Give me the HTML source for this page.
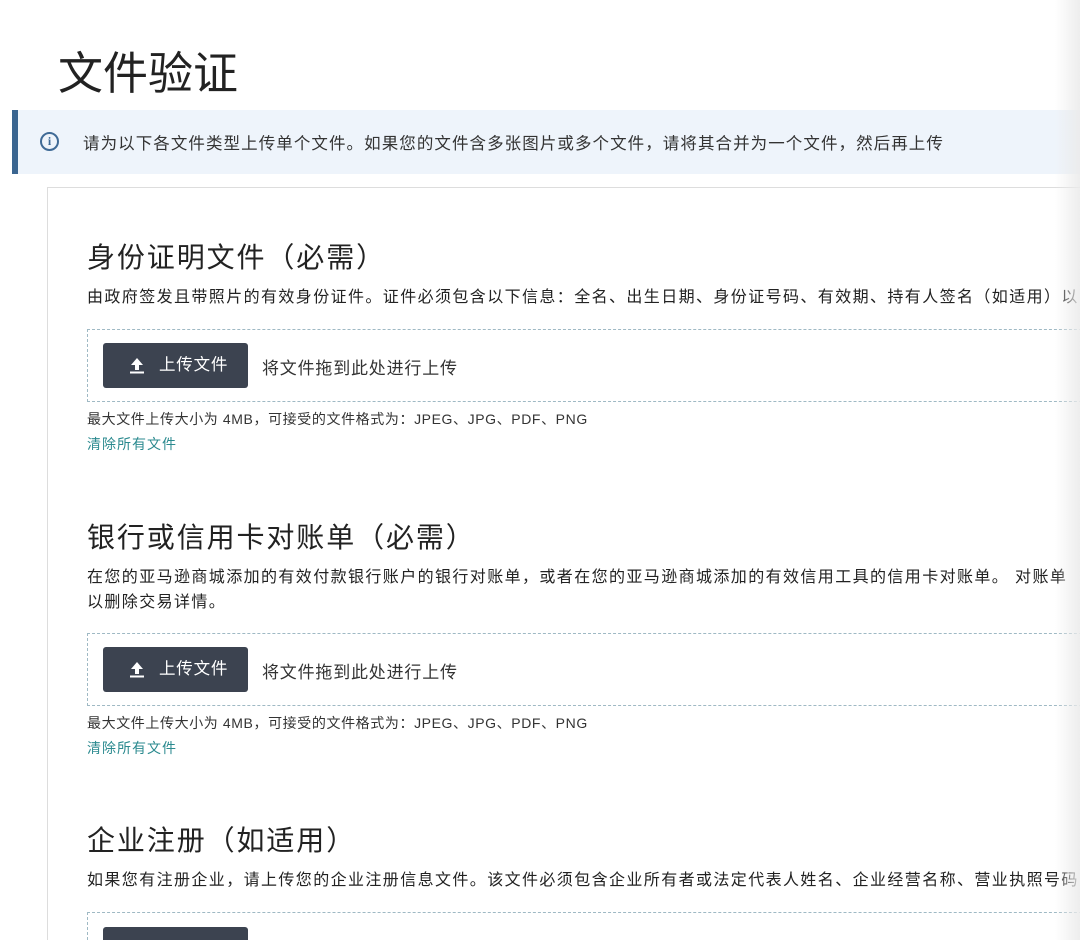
<!DOCTYPE html>
<html style="overflow:hidden;height:940px"><head><meta charset="utf-8"><style>
body{margin:0;width:1080px;height:940px;overflow:hidden;background:#fff;font-family:"Liberation Sans","Noto Sans CJK SC",sans-serif;color:#222;position:relative}
.abs{position:absolute;white-space:nowrap}
h1{position:absolute;left:58px;top:44px;margin:0;font-size:45px;font-weight:normal;line-height:60px;color:#222}
.info{position:absolute;left:12px;top:110px;width:1068px;height:64px;background:#eef4fb;border-left:6px solid #3a6590;box-sizing:border-box}
.info .t{position:absolute;left:65px;top:20px;font-size:16.5px;letter-spacing:1.07px;color:#333}
.ico{position:absolute;left:22px;top:22px;width:19px;height:19px;border:2px solid #3f6a96;border-radius:50%;box-sizing:border-box;color:#3f6a96;font:bold 12px/15px "Liberation Serif",serif;text-align:center}
.card{position:absolute;left:47px;top:187px;width:1100px;height:760px;border:1px solid #ddd}
.h{font-size:28px;line-height:36px;color:#222;left:87px;letter-spacing:1.9px}
.d{font-size:16px;line-height:25px;color:#222;left:87px;letter-spacing:1.4px}
.drop{position:absolute;left:87px;width:1000px;height:73px;border:1px dashed #9fb9c4;box-sizing:border-box}
.btn{position:absolute;left:103px;width:145px;height:45px;background:#3c4350;border-radius:3px;color:#fff;font-size:16.5px;line-height:45px}
.btn span{position:absolute;left:56px;letter-spacing:0.8px}
.btn svg{position:absolute;left:26px;top:14px}
.dr{left:262px;font-size:17px;letter-spacing:0.8px;color:#333}
.s{left:87px;font-size:14px;color:#333;letter-spacing:0.6px}
.c{left:87px;font-size:14px;color:#2b8a8f;letter-spacing:1px}
.fade{position:absolute;right:0;top:0;width:25px;height:940px;background:linear-gradient(to right,rgba(240,240,240,0),rgba(235,235,235,0.9))}
</style></head><body>
<h1>文件验证</h1>
<div class="info"><div class="ico">i</div><div class="t">请为以下各文件类型上传单个文件。如果您的文件含多张图片或多个文件，请将其合并为一个文件，然后再上传</div></div>
<div class="card"></div>

<div class="abs h" style="top:240px">身份证明文件（必需）</div>
<div class="abs d" style="top:285px">由政府签发且带照片的有效身份证件。证件必须包含以下信息：全名、出生日期、身份证号码、有效期、持有人签名（如适用）以</div>
<div class="drop" style="top:329px"></div>
<div class="btn" style="top:343px"><svg width="16" height="17" viewBox="0 0 16 17"><path d="M8 1L2 8h4v5h4V8h4z" fill="#fff"/><rect x="1" y="14.5" width="14" height="2" fill="#fff"/></svg><span>上传文件</span></div>
<div class="abs dr" style="top:354px">将文件拖到此处进行上传</div>
<div class="abs s" style="top:409px">最大文件上传大小为 4MB，可接受的文件格式为：JPEG、JPG、PDF、PNG</div>
<div class="abs c" style="top:434px">清除所有文件</div>

<div class="abs h" style="top:520px">银行或信用卡对账单（必需）</div>
<div class="abs d" style="top:565px">在您的亚马逊商城添加的有效付款银行账户的银行对账单，或者在您的亚马逊商城添加的有效信用工具的信用卡对账单。 对账单</div>
<div class="abs d" style="top:590px">以删除交易详情。</div>
<div class="drop" style="top:633px"></div>
<div class="btn" style="top:647px"><svg width="16" height="17" viewBox="0 0 16 17"><path d="M8 1L2 8h4v5h4V8h4z" fill="#fff"/><rect x="1" y="14.5" width="14" height="2" fill="#fff"/></svg><span>上传文件</span></div>
<div class="abs dr" style="top:658px">将文件拖到此处进行上传</div>
<div class="abs s" style="top:713px">最大文件上传大小为 4MB，可接受的文件格式为：JPEG、JPG、PDF、PNG</div>
<div class="abs c" style="top:738px">清除所有文件</div>

<div class="abs h" style="top:823px">企业注册（如适用）</div>
<div class="abs d" style="top:868px">如果您有注册企业，请上传您的企业注册信息文件。该文件必须包含企业所有者或法定代表人姓名、企业经营名称、营业执照号码</div>
<div class="drop" style="top:912px;height:28px;border-bottom:none"></div>
<div class="btn" style="top:927px;height:13px;border-radius:3px 3px 0 0"></div>
<div class="fade"></div>
</body></html>
